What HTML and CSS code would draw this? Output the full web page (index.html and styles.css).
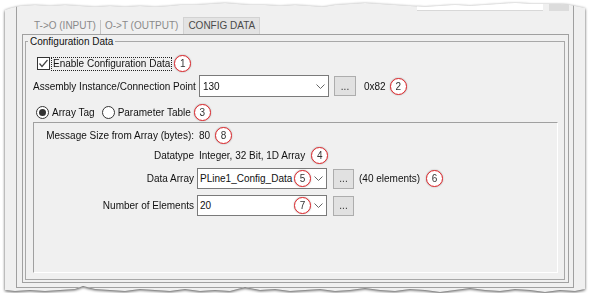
FILE: index.html
```html
<!DOCTYPE html>
<html>
<head>
<title>Config Data</title>
<link rel="stylesheet" href="styles.css">
</head>
<body>

<div class="sheet">
<div class="window">
<div class="form">

  <div class="topstrip"><span class="topfield"></span><span class="topbtn"></span></div>

  <div class="tabs">
    <span class="tab">T-&gt;O (INPUT)</span>
    <span class="tab sep">O-&gt;T (OUTPUT)</span>
    <span class="tab active">CONFIG DATA</span>
  </div>

  <div class="panel">
  <fieldset class="group">
    <legend>Configuration Data</legend>

    <div class="row r-check">
      <span class="checkbox"><svg width="11" height="11" viewBox="0 0 11 11"><polyline points="1.5,5.5 4,8.5 9.5,2" fill="none" stroke="#444" stroke-width="1.2"/></svg></span>
      <span class="focus">Enable Configuration Data</span>
      <span class="badge b1">1</span>
    </div>

    <div class="row r-assembly">
      <span class="label">Assembly Instance/Connection Point</span>
      <span class="combo big">130<svg class="chev" width="9" height="5" viewBox="0 0 9 5"><polyline points="0.5,0.5 4.5,4.5 8.5,0.5" fill="none" stroke="#666" stroke-width="1"/></svg></span>
      <span class="btn">...</span>
      <span class="hex">0x82</span>
      <span class="badge b2">2</span>
    </div>

    <div class="row r-radio">
      <span class="radio on"></span><span class="rlabel">Array Tag</span>
      <span class="radio second"></span><span class="rlabel">Parameter Table</span>
      <span class="badge b3">3</span>
    </div>

    <div class="sunken">
      <span class="lbl">Message Size from Array (bytes):</span>
      <span class="val"><span class="txt">80</span><span class="badge b8">8</span></span>

      <span class="lbl">Datatype</span>
      <span class="val"><span class="txt">Integer, 32 Bit, 1D Array</span><span class="badge b4">4</span></span>

      <span class="lbl">Data Array</span>
      <span class="val">
        <span class="combo">PLine1_Config_Data<span class="badge over">5</span><svg class="chev" width="9" height="5" viewBox="0 0 9 5"><polyline points="0.5,0.5 4.5,4.5 8.5,0.5" fill="none" stroke="#666" stroke-width="1"/></svg></span>
        <span class="btn small">...</span>
        <span class="count">(40 elements)</span>
        <span class="badge b6">6</span>
      </span>

      <span class="lbl">Number of Elements</span>
      <span class="val">
        <span class="combo">20<span class="badge over">7</span><svg class="chev" width="9" height="5" viewBox="0 0 9 5"><polyline points="0.5,0.5 4.5,4.5 8.5,0.5" fill="none" stroke="#666" stroke-width="1"/></svg></span>
        <span class="btn small">...</span>
      </span>
    </div>

  </fieldset>
  </div>

</div>
</div>
</div>

</body>
</html>
```

FILE: styles.css
```css
*{ box-sizing: border-box; }
body{ margin: 0; background: #fff; font-family: "Liberation Sans", Arial, sans-serif; font-size: 10px; color: #111; }

/* torn out piece of the window */
.sheet{ filter: drop-shadow(0 1px 1.5px rgba(0,0,0,.7)); }
.window{ margin-left: 5px; width: 580px; height: 293px; background: #f0f0f0; padding-left: 11px;
  clip-path: polygon(0 10px, 6px 8px, 15px 6px, 30px 5px, 45px 6px, 60px 5px, 75px 6px, 90px 7px, 105px 6px, 120px 7px, 135px 6px, 150px 7px, 165px 6px, 175px 5px, 190px 5px, 205px 4px, 220px 3px, 232px 4px, 245px 5px, 260px 5px, 275px 6px, 290px 5px, 305px 6px, 318px 7px, 330px 5px, 345px 4px, 360px 3px, 375px 4px, 390px 5px, 405px 6px, 420px 7px, 435px 6px, 450px 5px, 465px 6px, 480px 5px, 495px 4px, 510px 3px, 525px 4px, 540px 4px, 555px 4px, 565px 5px, 575px 7px, 580px 8px,
    580px 289px, 570px 291px, 555px 290px, 540px 292px, 525px 290px, 510px 289px, 495px 291px, 480px 290px, 465px 288px, 450px 290px, 435px 292px, 420px 290px, 405px 289px, 390px 291px, 375px 290px, 360px 288px, 345px 290px, 330px 291px, 315px 289px, 300px 290px, 285px 291px, 270px 289px, 255px 290px, 240px 287px, 225px 291px, 210px 290px, 195px 291px, 180px 289px, 165px 291px, 150px 290px, 135px 289px, 120px 291px, 105px 290px, 90px 289px, 78px 286px, 70px 289px, 55px 290px, 40px 291px, 25px 290px, 10px 291px, 0 290px); }

.form{ width: 558px; height: 288px; border: 1px solid #a0a0a0; border-top: 0; padding: 0 4px 0 5px; }

.topstrip{ height: 17px; display: flex; align-items: flex-start; }
.topfield{ width: 129px; height: 11px; margin-left: 395px; background: #fff; border-bottom: 1px solid #d8d8d8; }
.topbtn{ width: 21px; height: 11px; margin-left: 6px; background: #dcdcdc; }

.tabs{ height: 17px; display: flex; align-items: flex-end; padding-left: 8px; }
.tab{ padding: 0 4px; height: 17px; line-height: 17px; color: #8a8a8a; white-space: nowrap; }
.sep{ height: 14px; line-height: 11px; border-left: 1px solid #c4c4c4; }
.active{ margin-left: 1px; background: #e3e3e3; border: 1px solid #d2d2d2; border-bottom: 0; line-height: 16px; color: #4a4a4a; }

.panel{ width: 547px; height: 249px; border: 1px solid #a0a0a0; padding: 0 3px 0 2px; }

.group{ margin: 0; padding: 0; width: 540px; height: 245px; min-width: 0; border: 1px solid #a8a8a8; }
.group legend{ margin-left: 2px; padding: 0 2px; line-height: 13px; }

.row{ display: flex; align-items: center; white-space: nowrap; }
.r-check{ height: 17px; margin-top: 7px; padding-left: 11px; }
.r-assembly{ height: 22px; margin-top: 3px; padding-left: 7px; }
.r-radio{ height: 17px; margin-top: 7px; padding-left: 10px; }

.checkbox{ width: 13px; height: 13px; border: 1px solid #333; background: #fff; display: flex; align-items: center; justify-content: center; }
.focus{ margin-left: 1px; padding: 0 1px; line-height: 12px; border: 1px dotted #222; }

.label{ width: 160px; margin-right: 6px; text-align: right; }

.combo{ position: relative; display: flex; align-items: center; width: 130px; height: 21px; padding-left: 2px; background: #fff; border: 1px solid #7a7a7a; }
.combo.big{ height: 22px; padding-left: 3px; }
.chev{ margin-left: auto; margin-right: 3px; }

.btn{ display: flex; align-items: center; justify-content: center; width: 22px; height: 20px; margin-left: 5px; background: #e1e1e1; border: 1px solid #adadad; color: #333; }
.btn.small{ width: 21px; margin-left: 6px; }

.hex{ margin-left: 8px; }

.radio{ width: 13px; height: 13px; border: 1px solid #333; border-radius: 50%; background: #fff; display: flex; align-items: center; justify-content: center; }
.radio.on::after{ content: ""; width: 7px; height: 7px; border-radius: 50%; background: #333; }
.radio.second{ margin-left: 7px; }
.rlabel{ margin-left: 3px; }

.sunken{ margin: 1px 0 0 7px; width: 525px; height: 151px; border-top: 1px solid #a0a0a0; border-left: 1px solid #a0a0a0; border-bottom: 1px solid #fff; border-right: 1px solid #fff;
  padding-top: 5px; display: grid; grid-template-columns: 160px 1fr; grid-template-rows: 14px 14px 21px 21px; column-gap: 3px; row-gap: 6px; align-items: center; align-content: start; }
.lbl{ text-align: right; white-space: nowrap; }
.val{ display: flex; align-items: center; white-space: nowrap; }
.txt{ padding-left: 2px; }
.count{ margin-left: 5px; }

/* numbered callouts */
.badge{ display: inline-flex; align-items: center; justify-content: center; flex: none; width: 17px; height: 17px; border-radius: 50%; border: 1.5px solid #e1262b; background: #fff; color: #333; font-size: 10px; box-shadow: 0 0 1.5px rgba(0,0,0,.4); }
.b1{ margin-left: 2px; }
.b2{ margin-left: 4px; }
.b3{ margin-left: 3px; }
.b8{ margin-left: 5px; }
.b4{ margin-left: 6px; }
.b6{ margin-left: 6px; }
.over{ position: absolute; left: 96px; top: 50%; margin-top: -8.5px; }
```
